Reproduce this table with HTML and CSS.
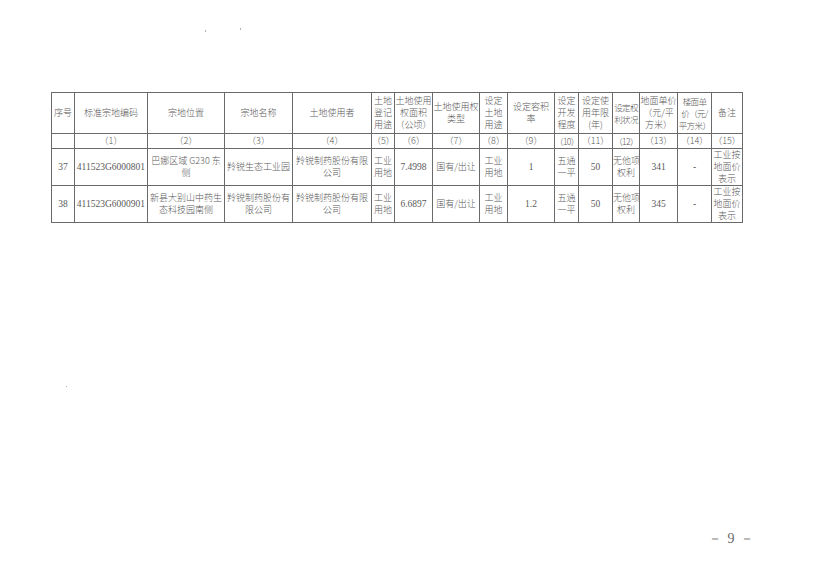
FILE: index.html
```html
<!DOCTYPE html>
<html lang="zh">
<head>
<meta charset="utf-8">
<link rel="stylesheet" href="styles.css">
</head>
<body>
<div class="page">
  <span class="speck s1"></span>
  <span class="speck s2"></span>
  <span class="speck s3"></span>
  <table class="land">
    <colgroup>
      <col style="width:23px"><col style="width:73px"><col style="width:77px"><col style="width:68px">
      <col style="width:79px"><col style="width:23px"><col style="width:38px"><col style="width:47px">
      <col style="width:28px"><col style="width:47px"><col style="width:24px"><col style="width:34px">
      <col style="width:27px"><col style="width:38px"><col style="width:34px"><col style="width:31px">
    </colgroup>
    <tr class="head">
      <td>序号</td><td>标准宗地编码</td><td>宗地位置</td><td>宗地名称</td><td>土地使用者</td>
      <td>土地<br>登记<br>用途</td><td>土地使用<br>权面积<br>（公顷）</td><td>土地使用权<br>类型</td>
      <td>设定<br>土地<br>用途</td><td>设定容积<br>率</td><td>设定<br>开发<br>程度</td><td>设定使<br>用年限<br>(年)</td>
      <td class="tight">设定权<br>利状况</td><td>地面单价<br>（元/平<br>方米）</td><td class="tight">楼面单<br>价（元/<br>平方米）</td><td>备注</td>
    </tr>
    <tr class="nums">
      <td></td><td>（1）</td><td>（2）</td><td>（3）</td><td>（4）</td><td>（5）</td><td>（6）</td><td>（7）</td>
      <td>（8）</td><td>（9）</td><td class="tight">（10）</td><td>（11）</td><td class="tight">（12）</td><td>（13）</td><td>（14）</td><td>（15）</td>
    </tr>
    <tr class="row">
      <td class="num">37</td><td class="num">411523G6000801</td><td>巴娜区域 G230 东<br>侧</td><td>羚锐生态工业园</td>
      <td>羚锐制药股份有限<br>公司</td><td>工业<br>用地</td><td class="num">7.4998</td><td>国有/出让</td>
      <td>工业<br>用地</td><td class="num">1</td><td>五通<br>一平</td><td class="num">50</td><td>无他项<br>权利</td>
      <td class="num">341</td><td class="num">-</td><td>工业按<br>地面价<br>表示</td>
    </tr>
    <tr class="row">
      <td class="num">38</td><td class="num">411523G6000901</td><td>新县大别山中药生<br>态科技园南侧</td><td>羚锐制药股份有<br>限公司</td>
      <td>羚锐制药股份有限<br>公司</td><td>工业<br>用地</td><td class="num">6.6897</td><td>国有/出让</td>
      <td>工业<br>用地</td><td class="num">1.2</td><td>五通<br>一平</td><td class="num">50</td><td>无他项<br>权利</td>
      <td class="num">345</td><td class="num">-</td><td>工业按<br>地面价<br>表示</td>
    </tr>
  </table>
  <div class="pageno">－ 9 －</div>
</div>
</body>
</html>
```

FILE: styles.css
```css
html, body {
  margin: 0;
  padding: 0;
  background: #ffffff;
}
.page {
  position: relative;
  width: 824px;
  height: 578px;
  box-sizing: border-box;
  padding: 92px 0 0 51px;
  font-family: "Noto Sans CJK SC", "Liberation Serif", serif;
  color: #5a5a5a;
}
.land {
  border-collapse: collapse;
  table-layout: fixed;
  width: 691px;
  border: 1px solid #5e5e5e;
}
.land td {
  border: 1px solid #6a6a6a;
  padding: 0;
  text-align: center;
  vertical-align: middle;
  font-size: 9px;
  line-height: 12px;
  font-weight: 300;
  overflow: hidden;
  white-space: nowrap;
}
.land td.tight {
  letter-spacing: -0.6px;
  font-size: 8.5px;
}
.land .head td {
  height: 40px;
}
.land .nums td {
  height: 14px;
  line-height: 12px;
}
.land .row td {
  height: 35px;
}
.land td.num {
  font-family: "Liberation Serif", serif;
  font-weight: 400;
  font-size: 9.5px;
}
.pageno {
  position: absolute;
  left: 708px;
  top: 530px;
  font-family: "Liberation Serif", serif;
  font-size: 14px;
  color: #6a6a6a;
  letter-spacing: 1px;
}
.speck {
  position: absolute;
  width: 1px;
  height: 2px;
  background: #b0b0b0;
}
.s1 { left: 205px; top: 30px; }
.s2 { left: 240px; top: 28px; }
.s3 { left: 66px; top: 386px; width: 1px; height: 1px; }
```
